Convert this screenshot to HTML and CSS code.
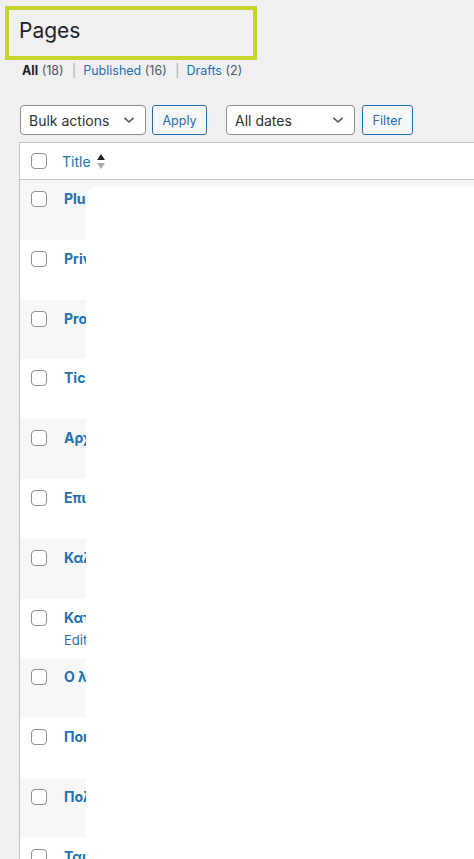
FILE: index.html
```html
<!DOCTYPE html>
<html lang="en">

<head>
    <meta charset="UTF-8">
    <meta name="viewport" content="width=device-width, initial-scale=1.0">
    <title>Pages</title>
    <link rel="stylesheet" href="styles.css">
</head>

<body>

    <div class="wrap">
        <!-- Highlighted page heading -->
        <h1 class="page-title">Pages</h1>

        <ul class="subsubsub">
            <li><b class="current">All</b> <span class="count">(18)</span> <span class="sep">|</span></li>
            <li><a href="#">Published</a> <span class="count">(16)</span> <span class="sep">|</span></li>
            <li><a href="#">Drafts</a> <span class="count">(2)</span></li>
        </ul>

        <!-- Bulk actions / filters -->
        <div class="tablenav">
            <div class="fake-select bulk">
                <span>Bulk actions</span>
                <svg width="12" height="8" viewBox="0 0 12 8"><path d="M1.5 1.8 L6 6 L10.5 1.8" fill="none" stroke="#50575e" stroke-width="1.6"/></svg>
            </div>
            <button class="button">Apply</button>
            <div class="fake-select dates">
                <span>All dates</span>
                <svg width="12" height="8" viewBox="0 0 12 8"><path d="M1.5 1.8 L6 6 L10.5 1.8" fill="none" stroke="#50575e" stroke-width="1.6"/></svg>
            </div>
            <button class="button">Filter</button>
        </div>

        <!-- Pages list -->
        <table class="pages-table">
            <thead>
                <tr>
                    <th class="check-col"><span class="checkbox"></span></th>
                    <th class="title-col">
                        <a href="#" class="sort-link">Title
                            <svg width="8" height="15" viewBox="0 0 8 15"><path d="M0 6 L4 0 L8 6 Z" fill="#1d2327"/><path d="M0 9 L4 15 L8 9 Z" fill="#a7aaad"/></svg>
                        </a>
                    </th>
                </tr>
            </thead>
            <tbody id="pages-tbody"></tbody>
        </table>
    </div>

    <!-- Panel lying over the list -->
    <div class="overlay-panel"></div>

    <script>
        const pages = [
            "Plugins",
            "Privacy Policy",
            "Products",
            "Tickets",
            "Αρχική",
            "Επικοινωνία",
            "Καλάθι",
            "Κατάστημα",
            "Ο λογαριασμός μου",
            "Ποιοι είμαστε",
            "Πολιτική απορρήτου",
            "Ταμείο"
        ];

        const tbody = document.getElementById('pages-tbody');
        pages.forEach((title, i) => {
            const actions = i === 7 ? `<div class="row-actions"><a href="#">Edit</a></div>` : '';
            const html = `
                <tr>
                    <td class="check-col"><span class="checkbox"></span></td>
                    <td class="title-col"><a href="#" class="row-title">${title}</a>${actions}</td>
                </tr>`;
            tbody.insertAdjacentHTML('beforeend', html);
        });
    </script>

</body>

</html>
```

FILE: styles.css
```css
body {
    margin: 0;
    background-color: #f0f0f1;
    font-family: Inter, "Noto Sans", sans-serif;
    color: #3c434a;
    overflow: hidden;
    height: 859px;
}

.wrap {
    position: relative;
    overflow: hidden;
}

.page-title {
    box-sizing: border-box;
    width: 252px;
    height: 54px;
    margin: 6px 0 0 5px;
    padding: 0 10px 5px;
    border: 4px solid #c6d42c;
    display: flex;
    align-items: center;
    font-size: 21px;
    font-weight: 400;
    color: #1d2327;
}

.subsubsub {
    list-style: none;
    margin: 1px 0 0;
    padding: 0 0 0 22px;
    display: flex;
    gap: 7px;
    font-size: 12.5px;
    line-height: 20px;
    color: #50575e;
}

.subsubsub a {
    color: #2271b1;
    text-decoration: none;
}

.subsubsub .current {
    color: #1d2327;
    font-weight: 700;
}

.subsubsub .sep {
    color: #a7aaad;
    margin-left: 5px;
}

.tablenav {
    display: flex;
    align-items: center;
    height: 30px;
    margin: 24px 0 0 20px;
}

.fake-select {
    box-sizing: border-box;
    height: 30px;
    border: 1px solid #8c8f94;
    border-radius: 4px;
    background-color: #fff;
    display: flex;
    align-items: center;
    justify-content: space-between;
    padding: 0 10px 0 8px;
    font-size: 14px;
    color: #2c3338;
}

.fake-select.bulk {
    width: 126px;
    margin-right: 6px;
}

.fake-select.dates {
    width: 129px;
    margin-right: 7px;
}

.button {
    box-sizing: border-box;
    height: 30px;
    padding: 0 9.5px;
    border: 1px solid #2271b1;
    border-radius: 3px;
    background-color: #f6f7f7;
    color: #2271b1;
    font-family: inherit;
    font-size: 12.5px;
}

.button:first-of-type {
    margin-right: 19px;
}

.pages-table {
    width: 455px;
    margin: 7px 0 0 19px;
    border-collapse: collapse;
    background-color: #fff;
    border-top: 1px solid #c3c4c7;
    border-left: 1px solid #c3c4c7;
}

.pages-table thead th {
    height: 36px;
    padding: 0;
    border-bottom: 1px solid #c3c4c7;
    text-align: left;
    font-weight: 400;
}

.pages-table td {
    height: 59.8px;
    padding: 0;
    vertical-align: top;
}

.pages-table tbody tr:nth-child(odd) {
    background-color: #f6f7f7;
}

.check-col {
    width: 42px;
}

.checkbox {
    display: block;
    box-sizing: border-box;
    width: 16px;
    height: 16px;
    margin-left: 11px;
    border: 1px solid #8c8f94;
    border-radius: 4px;
    background-color: #fff;
}

tbody .checkbox {
    margin-top: 11px;
}

.sort-link {
    display: inline-flex;
    align-items: center;
    gap: 6px;
    color: #2271b1;
    text-decoration: none;
    font-size: 14px;
}

.row-title {
    display: block;
    margin: 9px 0 0 2px;
    color: #2271b1;
    font-weight: 700;
    font-size: 14px;
    line-height: 20px;
    text-decoration: none;
    white-space: nowrap;
}

.row-actions {
    margin: 3px 0 0 2px;
    font-size: 13px;
    line-height: 18px;
}

.row-actions a {
    color: #2271b1;
    text-decoration: none;
}

.overlay-panel {
    position: absolute;
    left: 86px;
    top: 187px;
    right: -20px;
    bottom: -20px;
    background-color: #fff;
    border-radius: 10px;
}
```
